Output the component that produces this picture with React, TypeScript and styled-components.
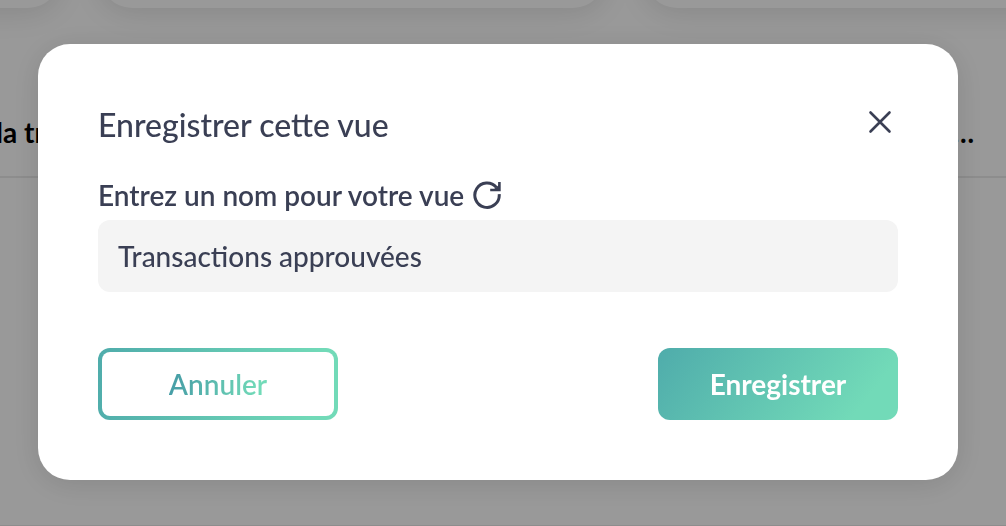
import React, { useState } from "react";
import styled, { createGlobalStyle, css } from "styled-components";

const ink = "#3a3f54";
const gradient = "linear-gradient(128deg, #4facab 0%, #72dab8 84%)";

const GlobalStyle = createGlobalStyle`
  *, *::before, *::after { box-sizing: border-box; }
  body {
    margin: 0;
    background: #fff;
    color: ${ink};
    font-family: Lato, "Open Sans", sans-serif;
  }
  button, input { font: inherit; }
`;

const Page = styled.main`
  display: flex;
  flex-direction: column;
  min-height: 100vh;
  overflow: hidden;
`;

const CardStrip = styled.div`
  display: flex;
  gap: 40px;
  margin: -64px 0 0 -445px;
`;

const SummaryCard = styled.div`
  flex: 0 0 505px;
  height: 72px;
  border-radius: 32px;
  background: #fff;
  box-shadow: 0 4px 30px rgba(0, 0, 0, 0.12);
`;

const ListHeader = styled.div`
  display: flex;
  justify-content: space-between;
  align-items: center;
  margin: 80px 0 0 -4px;
  padding: 0 32px 0 0;
  height: 90px;
  border-bottom: 2px solid #ebebeb;
  color: #000;
  font-size: 28px;
  font-weight: 700;
`;

const ListRow = styled.div`
  flex: 1;
  min-height: 348px;
  border-bottom: 1px solid #ebebeb;
`;

const Overlay = styled.div`
  position: fixed;
  inset: 0;
  display: flex;
  align-items: flex-start;
  padding: 44px 48px 46px 38px;
  background: rgba(0, 0, 0, 0.4);
`;

const Dialog = styled.form`
  flex: 1;
  display: flex;
  flex-direction: column;
  padding: 60px;
  border-radius: 32px;
  background: #fff;
  box-shadow: 0 4px 30px rgba(0, 0, 0, 0.12);
`;

const DialogHeader = styled.header`
  display: flex;
  justify-content: space-between;
  align-items: flex-start;
  height: 68px;
`;

const Title = styled.h1`
  margin: 0;
  font-size: 32px;
  line-height: 42px;
  font-weight: 500;
`;

const IconButton = styled.button`
  display: flex;
  padding: 0;
  border: 0;
  background: none;
  color: inherit;
  cursor: pointer;
`;

const LabelRow = styled.div`
  display: flex;
  align-items: center;
  gap: 8px;
  height: 48px;
  padding-bottom: 2px;
  font-size: 28px;
  font-weight: 600;
`;

const NameInput = styled.input`
  width: 100%;
  height: 72px;
  padding: 0 20px;
  border: 0;
  border-radius: 12px;
  outline: 0;
  background: #f4f4f4;
  color: inherit;
  font-size: 28px;
  font-weight: 500;
`;

const Actions = styled.footer`
  display: flex;
  justify-content: space-between;
  margin-top: 56px;
`;

const ActionButton = styled.button<{ $outlined?: boolean }>`
  width: 240px;
  height: 72px;
  padding: 0;
  border-radius: 12px;
  font-size: 28px;
  cursor: pointer;
  ${({ $outlined }) =>
    $outlined
      ? css`
          border: 4px solid transparent;
          background: linear-gradient(#fff, #fff) padding-box, linear-gradient(100deg, #4facab, #72dab8 90%) border-box;
          font-weight: 600;
        `
      : css`
          border: 0;
          background: ${gradient};
          color: #fff;
          font-weight: 700;
        `}
`;

const GradientText = styled.span`
  background: linear-gradient(100deg, #449aa5, #72dab8 90%);
  background-clip: text;
  color: transparent;
`;

const CloseIcon = () => (
  <svg width="36" height="36" viewBox="0 0 36 36" fill="none" stroke="currentColor" strokeWidth="2.6" strokeLinecap="round" aria-hidden="true">
    <path d="M8.5 8.5 27.5 27.5M27.5 8.5 8.5 27.5" />
  </svg>
);

const ResetIcon = () => (
  <svg width="30" height="30" viewBox="0 0 30 30" fill="none" stroke="currentColor" strokeWidth="3" aria-hidden="true">
    <path d="M27.2 14.2A12.2 12.2 0 1 1 24.4 7.4" />
    <path d="M27.4 2V10H18.2" strokeWidth="2.6" />
    <path d="M27.4 4.6V10H21Z" fill="currentColor" stroke="none" />
  </svg>
);

export default function App() {
  const [name, setName] = useState("Transactions approuvées");
  return (
    <>
      <GlobalStyle />
      <Page>
        <CardStrip>
          <SummaryCard />
          <SummaryCard />
          <SummaryCard />
        </CardStrip>
        <ListHeader>
          <span>la tr</span>
          <span>…</span>
        </ListHeader>
        <ListRow />
      </Page>
      <Overlay>
        <Dialog role="dialog" aria-modal="true" aria-labelledby="dialog-title" onSubmit={(e) => e.preventDefault()}>
          <DialogHeader>
            <Title id="dialog-title">Enregistrer cette vue</Title>
            <IconButton type="button" aria-label="Fermer">
              <CloseIcon />
            </IconButton>
          </DialogHeader>
          <LabelRow>
            <label htmlFor="view-name">Entrez un nom pour votre vue</label>
            <IconButton type="button" aria-label="Réinitialiser" onClick={() => setName("")}>
              <ResetIcon />
            </IconButton>
          </LabelRow>
          <NameInput id="view-name" value={name} onChange={(e) => setName(e.target.value)} />
          <Actions>
            <ActionButton type="button" $outlined>
              <GradientText>Annuler</GradientText>
            </ActionButton>
            <ActionButton type="submit">Enregistrer</ActionButton>
          </Actions>
        </Dialog>
      </Overlay>
    </>
  );
}
